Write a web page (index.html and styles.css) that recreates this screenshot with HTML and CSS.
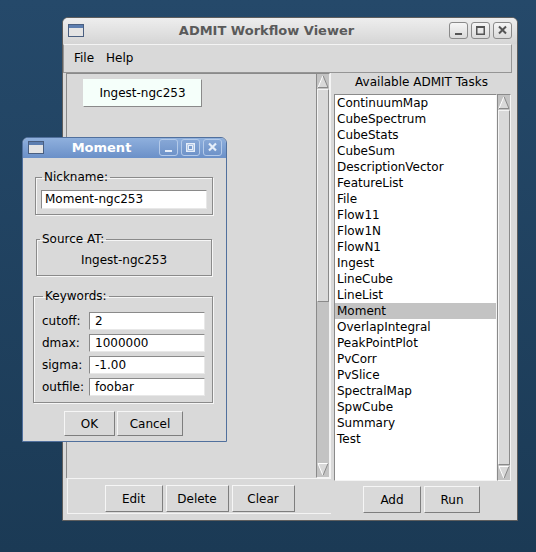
FILE: index.html
```html
<!DOCTYPE html>
<html>
<head>
<meta charset="utf-8">
<link rel="stylesheet" href="styles.css">
</head>
<body>
<div class="win main">
  <div class="titlebar">
    <svg class="winicon" width="16" height="13" viewBox="0 0 16 13"><rect x="0.5" y="0.5" width="15" height="12" fill="#e4e4e4" stroke="#4a5f80"/><rect x="1" y="1" width="14" height="3" fill="#5d7eb0"/></svg>
    <div class="title">ADMIT Workflow Viewer</div>
    <div class="tbtns">
      <div class="tb"><svg width="17" height="15" viewBox="0 0 17 15"><rect x="5" y="10" width="7" height="2" fill="#555"/></svg></div>
      <div class="tb"><svg width="17" height="15" viewBox="0 0 17 15"><rect x="4.75" y="3.75" width="7.5" height="7.5" fill="none" stroke="#555" stroke-width="1.5"/><rect x="4" y="3" width="9" height="2" fill="#555"/></svg></div>
      <div class="tb"><svg width="17" height="15" viewBox="0 0 17 15"><path d="M5 3.5 L12 10.5 M12 3.5 L5 10.5" stroke="#555" stroke-width="2"/></svg></div>
    </div>
  </div>
  <div class="wbody">
    <div class="menubar"><span>File</span><span>Help</span></div>
    <div class="mainrow">
      <div class="leftcol">
        <div class="canvasrow">
          <div class="canvas"><div class="node">Ingest-ngc253</div></div>
          <div class="sb">
            <svg class="arrow" width="12" height="15" viewBox="0 0 12 15"><polygon points="6,1.5 1,13.5 11,13.5" fill="#d9d9d9"/><path d="M1 13.5 L6 1.5" stroke="#fff"/><path d="M6 1.5 L11 13.5 L1 13.5" stroke="#8a8a8a" fill="none"/></svg>
            <div class="thumb fixed"></div>
            <div class="trough"></div>
            <svg class="arrow" width="12" height="15" viewBox="0 0 12 15"><polygon points="1,1.5 11,1.5 6,13.5" fill="#d9d9d9"/><path d="M1 1.5 L11 1.5 M1 1.5 L6 13.5" stroke="#fff" fill="none"/><path d="M11 1.5 L6 13.5" stroke="#8a8a8a"/></svg>
          </div>
        </div>
        <div class="btnbar">
          <div class="btn w-edit">Edit</div>
          <div class="btn w-del">Delete</div>
          <div class="btn w-clear">Clear</div>
        </div>
      </div>
      <div class="rightcol">
        <div class="lbl">Available ADMIT Tasks</div>
        <div class="listrow">
          <div class="listbox">
            <div class="item">ContinuumMap</div>
            <div class="item">CubeSpectrum</div>
            <div class="item">CubeStats</div>
            <div class="item">CubeSum</div>
            <div class="item">DescriptionVector</div>
            <div class="item">FeatureList</div>
            <div class="item">File</div>
            <div class="item">Flow11</div>
            <div class="item">Flow1N</div>
            <div class="item">FlowN1</div>
            <div class="item">Ingest</div>
            <div class="item">LineCube</div>
            <div class="item">LineList</div>
            <div class="item sel">Moment</div>
            <div class="item">OverlapIntegral</div>
            <div class="item">PeakPointPlot</div>
            <div class="item">PvCorr</div>
            <div class="item">PvSlice</div>
            <div class="item">SpectralMap</div>
            <div class="item">SpwCube</div>
            <div class="item">Summary</div>
            <div class="item">Test</div>
          </div>
          <div class="sb">
            <svg class="arrow" width="12" height="15" viewBox="0 0 12 15"><polygon points="6,1.5 1,13.5 11,13.5" fill="#d9d9d9"/><path d="M1 13.5 L6 1.5" stroke="#fff"/><path d="M6 1.5 L11 13.5 L1 13.5" stroke="#8a8a8a" fill="none"/></svg>
            <div class="thumb grow"></div>
            <svg class="arrow" width="12" height="15" viewBox="0 0 12 15"><polygon points="1,1.5 11,1.5 6,13.5" fill="#d9d9d9"/><path d="M1 1.5 L11 1.5 M1 1.5 L6 13.5" stroke="#fff" fill="none"/><path d="M11 1.5 L6 13.5" stroke="#8a8a8a"/></svg>
          </div>
        </div>
        <div class="btnrow">
          <div class="btn w-add">Add</div>
          <div class="btn w-run">Run</div>
        </div>
      </div>
    </div>
  </div>
</div>

<div class="win dlg">
  <div class="titlebar">
    <svg class="winicon" width="16" height="13" viewBox="0 0 16 13"><rect x="0.5" y="0.5" width="15" height="12" fill="#e4e4e4" stroke="#4a5f80"/><rect x="1" y="1" width="14" height="3" fill="#5d7eb0"/></svg>
    <div class="title">Moment</div>
    <div class="tbtns">
      <div class="tb"><svg width="17" height="15" viewBox="0 0 17 15"><rect x="5" y="10" width="7" height="2" fill="#e6eef9"/></svg></div>
      <div class="tb"><svg width="17" height="15" viewBox="0 0 17 15"><rect x="4.75" y="3.75" width="7.5" height="7.5" fill="none" stroke="#e6eef9" stroke-width="1.5"/><rect x="6.5" y="5.5" width="4" height="4" fill="none" stroke="#e6eef9" stroke-width="1"/></svg></div>
      <div class="tb"><svg width="17" height="15" viewBox="0 0 17 15"><path d="M5 3.5 L12 10.5 M12 3.5 L5 10.5" stroke="#e6eef9" stroke-width="2.2"/></svg></div>
    </div>
  </div>
  <div class="dbody">
    <fieldset class="grp g-nick">
      <legend>Nickname:</legend>
      <div class="entry wide">Moment-ngc253</div>
    </fieldset>
    <fieldset class="grp g-src">
      <legend>Source AT:</legend>
      <div class="srctext">Ingest-ngc253</div>
    </fieldset>
    <fieldset class="grp g-kw">
      <legend>Keywords:</legend>
      <div class="kwgrid">
        <div class="kl">cutoff:</div><div class="entry">2</div>
        <div class="kl">dmax:</div><div class="entry">1000000</div>
        <div class="kl">sigma:</div><div class="entry">-1.00</div>
        <div class="kl">outfile:</div><div class="entry">foobar</div>
      </div>
    </fieldset>
    <div class="dbtns">
      <div class="btn w-ok">OK</div>
      <div class="btn w-cancel">Cancel</div>
    </div>
  </div>
</div>
</body>
</html>
```

FILE: styles.css
```css
* { box-sizing: border-box; }
html, body { margin: 0; padding: 0; }
body {
  width: 536px;
  height: 552px;
  overflow: hidden;
  position: relative;
  background: linear-gradient(#25496a, #1b3a55);
  font-family: "DejaVu Sans", sans-serif;
  font-size: 12px;
  color: #000;
}

.win { position: absolute; display: flex; flex-direction: column; background: #d9d9d9; }

.main {
  left: 62px; top: 17px; width: 456px; height: 504px;
  border: 1px solid #5e5e5e;
  border-radius: 6px 6px 0 0;
}

.titlebar {
  flex: none;
  display: flex;
  align-items: center;
  padding: 0 5px;
}
.main .titlebar {
  height: 26px;
  padding-bottom: 1px;
  background: linear-gradient(#eeeeee, #d5d5d5);
  border-radius: 5px 5px 0 0;
}
.winicon { flex: none; display: block; }
.title {
  flex: 1;
  text-align: center;
  font-weight: bold;
  font-size: 13px;
}
.main .title { color: #5a5a5a; }
.tbtns { display: flex; gap: 3px; }
.tb {
  width: 19px; height: 17px;
  border: 1px solid #8a8a8a;
  border-radius: 3px;
  background: linear-gradient(#f6f6f6, #dadada);
}
.tb svg { display: block; }

.wbody {
  flex: 1;
  display: flex;
  flex-direction: column;
  padding: 0 5px 2px 0;
}
.menubar {
  height: 29px;
  flex: none;
  display: flex;
  align-items: center;
  padding-left: 4px;
  padding-bottom: 2px;
  border: 1px solid #959595;
  border-top-color: #f4f4f4;
}
.menubar span { padding: 0 6px; }

.mainrow { flex: 1; display: flex; }
.leftcol { width: 268px; flex: none; display: flex; flex-direction: column; padding-left: 3px; }
.canvasrow { height: 405px; flex: none; display: flex; border-right: 1px solid #f4f4f4; }
.canvas {
  width: 250px;
  position: relative;
  border-top: 1px solid #8a8a8a;
  border-left: 1px solid #8a8a8a;
}
.node {
  position: absolute;
  left: 16px; top: 5px;
  width: 119px; height: 28px;
  background: #f5fffa;
  border: 1px solid;
  border-color: #f5fffa #8a8a8a #8a8a8a #f5fffa;
  display: flex; align-items: center; justify-content: center;
}

.sb {
  width: 14px;
  flex: none;
  display: flex;
  flex-direction: column;
  background: #c3c3c3;
  border: 1px solid;
  border-color: #8a8a8a #f4f4f4 #f4f4f4 #8a8a8a;
}
.arrow { display: block; flex: none; }
.thumb {
  background: #d9d9d9;
  border: 1px solid;
  border-color: #f4f4f4 #8a8a8a #8a8a8a #f4f4f4;
}
.thumb.fixed { height: 213px; flex: none; }
.thumb.grow { flex: 1; }
.trough { flex: 1; }

.btnbar {
  flex: 1;
  display: flex;
  justify-content: center;
  gap: 3px;
  padding-top: 6px;
  margin-left: 1px;
  margin-bottom: 4px;
  border: 1px solid #f4f4f4;
  border-right: none;
}
.btn {
  height: 27px;
  display: flex;
  align-items: center;
  justify-content: center;
  border: 1px solid;
  border-color: #f6f6f6 #7e7e7e #7e7e7e #f6f6f6;
}
.w-edit { width: 58px; }
.w-del { width: 63px; }
.w-clear { width: 63px; }
.w-add { width: 58px; }
.w-run { width: 56px; }

.rightcol { flex: 1; display: flex; flex-direction: column; }
.lbl { height: 21px; line-height: 18px; text-align: center; flex: none; }
.listrow { height: 387px; flex: none; display: flex; padding-left: 3px; }
.listbox {
  width: 163px;
  background: #fff;
  border: 1px solid;
  border-color: #8a8a8a #f4f4f4 #f4f4f4 #8a8a8a;
}
.item { height: 16px; line-height: 16px; padding-left: 2px; white-space: nowrap; }
.item.sel { background: #c3c3c3; }
.btnrow { flex: 1; display: flex; justify-content: center; gap: 3px; padding-top: 5px; }

/* dialog */
.dlg {
  left: 22px; top: 137px; width: 205px; height: 305px;
  border: 1px solid #51709d;
  border-radius: 6px 6px 0 0;
}
.dlg .titlebar {
  height: 20px;
  padding: 0 4px 1px 5px;
  background: linear-gradient(#8fb0dd, #6b90c8);
  border-radius: 5px 5px 0 0;
}
.dlg .title { color: #fff; }
.dlg .tb {
  border-color: #b4cae9;
  background: linear-gradient(#86a7d6, #6f93c9);
  height: 17px;
}
.dbody { flex: 1; display: flex; flex-direction: column; }

.grp {
  margin: 0;
  min-width: 0;
  border: 1px solid #8a8a8a;
  box-shadow: 1px 1px 0 #f6f6f6, inset 1px 1px 0 #f6f6f6;
}
.grp legend {
  padding: 0 2px;
  line-height: 15px;
  margin-left: 0;
}
.g-nick { margin: 12px 0 0 12px; width: 178px; padding: 5px 5px 5px 5px; }
.g-src { margin: 17px 0 0 13px; width: 176px; padding: 5px 4px 7px 4px; }
.g-kw { margin: 13px 0 0 10px; width: 180px; padding: 8px 7px 6px 8px; }
.g-nick legend { margin-left: 1px; }
.g-src legend { margin-left: -1px; }
.g-kw legend { margin-left: 1px; }

.entry {
  height: 18px;
  line-height: 16px;
  background: #fff;
  padding-left: 5px;
  border: 1px solid;
  border-color: #8a8a8a #e8e8e8 #e8e8e8 #8a8a8a;
  white-space: nowrap;
}
.entry.wide { height: 19px; padding-left: 3px; }
.srctext { text-align: center; line-height: 16px; }
.kwgrid {
  display: grid;
  grid-template-columns: 47px 116px;
  row-gap: 4px;
  align-items: center;
}
.kl { white-space: nowrap; }

.dbtns { display: flex; justify-content: center; gap: 2px; margin-top: 8px; padding-right: 2px; }
.dbtns .btn { height: 25px; }
.w-ok { width: 51px; }
.w-cancel { width: 66px; }
```
